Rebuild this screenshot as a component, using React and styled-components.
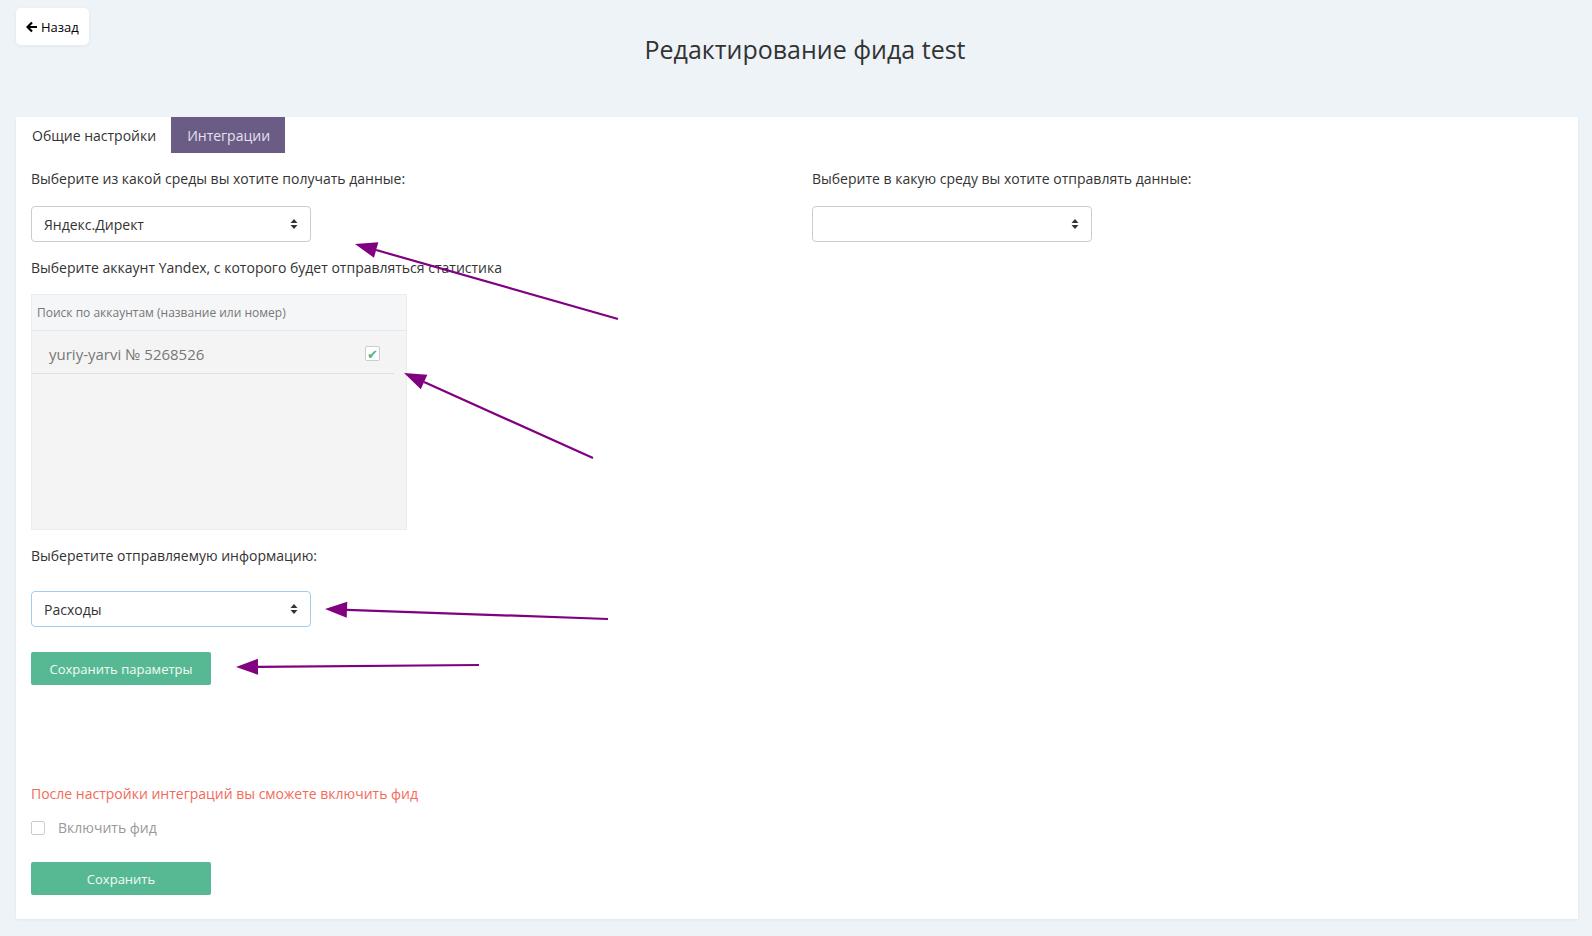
import React, { useState } from "react"
import styled, { createGlobalStyle } from "styled-components"

const GlobalStyle = createGlobalStyle`
  html, body {
    margin: 0;
    padding: 0;
    background: #eef3f8;
    font-family: "Open Sans", "Noto Sans", sans-serif;
    color: #333;
  }
  * { box-sizing: border-box; }
`

const SelectArrows = () => (
    <svg width="8" height="12" viewBox="0 0 8 12">
        <path d="M4 1 L7.5 5 L0.5 5 Z" fill="#333" />
        <path d="M4 11 L7.5 7 L0.5 7 Z" fill="#333" />
    </svg>
)

const BackArrow = () => (
    <svg width="12" height="12" viewBox="0 0 12 12">
        <path d="M11 6 H2 M6 1.5 L1.5 6 L6 10.5" stroke="#000" strokeWidth="2.2" fill="none" />
    </svg>
)

const Arrows = () => {
    const lines = [
        [618, 319, 355, 244],
        [593, 458, 404, 373],
        [608, 619, 325, 609],
        [479, 665, 236, 667],
    ]
    return (
        <Overlay width="1592" height="936">
            {lines.map(([x1, y1, x2, y2], i) => {
                const ang = Math.atan2(y2 - y1, x2 - x1)
                const len = 22
                const w = 8
                const bx = x2 - Math.cos(ang) * len
                const by = y2 - Math.sin(ang) * len
                const px = -Math.sin(ang) * w
                const py = Math.cos(ang) * w
                return (
                    <g key={i}>
                        <line x1={x1} y1={y1} x2={bx} y2={by} stroke="#800080" strokeWidth="2.2" />
                        <polygon
                            points={`${x2},${y2} ${bx + px},${by + py} ${bx - px},${by - py}`}
                            fill="#800080"
                        />
                    </g>
                )
            })}
        </Overlay>
    )
}

const App = () => {
    const [enabled, setEnabled] = useState(false)

    return (
        <>
        <GlobalStyle />
        <Page>
            <Header>
                <BackButton><BackArrow />Назад</BackButton>
                <Title>Редактирование фида test</Title>
            </Header>
            <Card>
                <Tabs>
                    <Tab>Общие настройки</Tab>
                    <Tab active>Интеграции</Tab>
                </Tabs>
                <Body>
                    <Columns>
                        <Column>
                            <Label>Выберите из какой среды вы хотите получать данные:</Label>
                            <Select>
                                <span>Яндекс.Директ</span>
                                <SelectArrows />
                            </Select>
                            <Label top={16}>Выберите аккаунт Yandex, с которого будет отправляться статистика</Label>
                            <AccountBox>
                                <SearchRow>Поиск по аккаунтам (название или номер)</SearchRow>
                                <AccountRow>
                                    <span>yuriy-yarvi № 5268526</span>
                                    <CheckBox>✔</CheckBox>
                                </AccountRow>
                            </AccountBox>
                            <Label top={16}>Выберетите отправляемую информацию:</Label>
                            <Select focused top={25}>
                                <span>Расходы</span>
                                <SelectArrows />
                            </Select>
                            <GreenButton top={25}>Сохранить параметры</GreenButton>
                        </Column>
                        <Column>
                            <Label>Выберите в какую среду вы хотите отправлять данные:</Label>
                            <Select>
                                <span></span>
                                <SelectArrows />
                            </Select>
                        </Column>
                    </Columns>
                    <Warning>После настройки интеграций вы сможете включить фид</Warning>
                    <EnableRow onClick={() => setEnabled(!enabled)}>
                        <EmptyBox>{enabled ? "✔" : ""}</EmptyBox>
                        Включить фид
                    </EnableRow>
                    <GreenButton top={25}>Сохранить</GreenButton>
                </Body>
            </Card>
            <Arrows />
        </Page>
        </>
    )
}

export default App

const Page = styled.div`
position: relative;
width: 1592px;
height: 936px;
padding: 8px 14px 0 16px;
`

const Overlay = styled.svg`
position: absolute;
left: 0;
top: 0;
pointer-events: none;
`

const Header = styled.div`
display: flex;
align-items: flex-start;
height: 109px;
`

const BackButton = styled.button`
display: flex;
align-items: center;
gap: 3px;
height: 37px;
width: 73px;
padding: 0 10px;
background: #fff;
border: none;
border-radius: 5px;
box-shadow: 0 1px 4px rgba(0, 0, 0, 0.06);
font-family: "Open Sans", sans-serif;
font-size: 13px;
color: #000;
`

const Title = styled.h1`
flex: 1;
margin: 25px 0 0 0;
padding-right: 57px;
text-align: center;
font-size: 25px;
font-weight: 400;
line-height: 32px;
color: #333;
`

const Card = styled.div`
background: #fff;
box-shadow: 0 1px 3px rgba(0, 0, 0, 0.06);
padding-bottom: 24px;
`

const Tabs = styled.div`
display: flex;
`

const Tab = styled.div`
height: 36px;
padding: 0 15px 0 16px;
display: flex;
align-items: center;
font-size: 14px;
background: ${p => p.active ? "#6a5c84" : "transparent"};
color: ${p => p.active ? "#e6e1ee" : "#333"};
`

const Body = styled.div`
padding: 0 15px;
`

const Columns = styled.div`
display: grid;
grid-template-columns: 781px 1fr;
`

const Column = styled.div`
display: flex;
flex-direction: column;
align-items: flex-start;
`

const Label = styled.div`
margin-top: ${p => p.top || 16}px;
font-size: 14px;
line-height: 20px;
color: #333;
`

const Select = styled.div`
margin-top: ${p => p.top || 17}px;
width: 280px;
height: 36px;
padding: 0 12px;
display: flex;
align-items: center;
justify-content: space-between;
border: 1px solid ${p => p.focused ? "#9fcdf0" : "#ccc"};
border-radius: 4px;
font-size: 14px;
color: #333;
background: #fff;
`

const AccountBox = styled.div`
margin-top: 16px;
width: 376px;
height: 236px;
background: #f4f4f4;
border: 1px solid #ececec;
`

const SearchRow = styled.div`
height: 36px;
padding: 0 5px;
display: flex;
align-items: center;
font-size: 12px;
color: #777;
background: #f5f6f7;
border-bottom: 1px solid #e8e8e8;
`

const AccountRow = styled.div`
margin-right: 12px;
height: 43px;
padding: 3px 14px 0 17px;
display: flex;
align-items: center;
justify-content: space-between;
font-size: 15px;
color: #777;
border-bottom: 1px solid #e0e0e0;
`

const CheckBox = styled.span`
width: 15px;
height: 15px;
display: flex;
align-items: center;
justify-content: center;
font-size: 13px;
color: #4fb386;
background: #fff;
border: 1px solid #ccc;
border-radius: 2px;
`

const GreenButton = styled.button`
display: block;
margin-top: ${p => p.top}px;
width: 180px;
height: 33px;
background: #56b993;
border: none;
border-radius: 2px;
font-family: "Open Sans", sans-serif;
font-size: 13px;
color: #f2fbf6;
`

const Warning = styled.div`
margin-top: 99px;
font-size: 14px;
line-height: 20px;
color: #f36a5a;
`

const EnableRow = styled.label`
margin-top: 14px;
display: flex;
align-items: center;
gap: 13px;
font-size: 14px;
color: #999;
cursor: pointer;
`

const EmptyBox = styled.span`
width: 14px;
height: 14px;
display: flex;
align-items: center;
justify-content: center;
font-size: 10px;
color: #4fb386;
border: 1px solid #ccc;
border-radius: 2px;
background: #fff;
`
